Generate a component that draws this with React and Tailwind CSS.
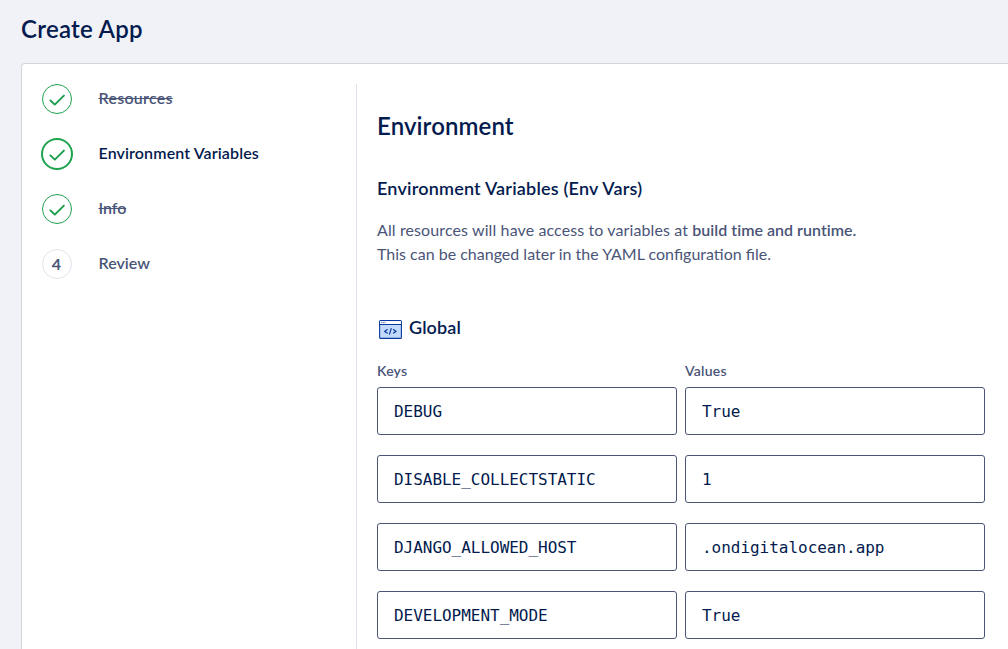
const steps = [
  { label: 'Resources', done: true, struck: true, tracking: 'tracking-[0.26px]' },
  { label: 'Environment Variables', done: true, active: true, tracking: 'tracking-[0.12px]' },
  { label: 'Info', done: true, struck: true, tracking: 'tracking-[-0.05px]' },
  { label: 'Review', number: 4, tracking: 'tracking-[0px]' },
];

const variables = [
  ['DEBUG', 'True'],
  ['DISABLE_COLLECTSTATIC', '1'],
  ['DJANGO_ALLOWED_HOST', '.ondigitalocean.app'],
  ['DEVELOPMENT_MODE', 'True'],
];

function StepMark({ step }) {
  if (!step.done) {
    return (
      <span className="flex size-[30px] items-center justify-center rounded-full border border-[#dfe2ea] pr-px pb-px text-[16px] font-bold text-[#4a5578]">
        {step.number}
      </span>
    );
  }
  return (
    <span
      className={
        step.active
          ? 'flex size-8 items-center justify-center rounded-full border-2 border-[#1ea34e]'
          : 'flex size-[30px] items-center justify-center rounded-full border border-[#1ea34e]'
      }
    >
      <svg className="size-4" viewBox="0 0 16 16" fill="none" stroke="#1a9d4b" strokeWidth="1.9" strokeLinecap="round" strokeLinejoin="round">
        <path d="M1.4 9.4 L5.8 13.6 L14.9 4.6" />
      </svg>
    </span>
  );
}

function Step({ step }) {
  const color = step.active ? 'text-[#031b4e]' : 'text-[#4a5578]';
  return (
    <li className="flex h-8 items-center">
      <span className="flex w-8 justify-center">{<StepMark step={step} />}</span>
      <span className={`mb-0.5 ml-[25.5px] text-[16px] leading-6 font-semibold ${color} ${step.tracking} ${step.struck ? 'line-through' : ''}`}>
        {step.label}
      </span>
    </li>
  );
}

function CodeWindowIcon() {
  return (
    <svg className="h-[19px] w-[23px]" viewBox="0 0 23 19" fill="none" stroke="#0a3a9c" strokeLinecap="round" strokeLinejoin="round">
      <rect x="0.6" y="0.6" width="21.8" height="17.8" rx="1" fill="#c3d9fb" strokeWidth="1.1" />
      <path d="M1.1 1.1h20.8v3H1.1z" fill="#fff" stroke="none" />
      <path d="M0.6 4.5h21.8" strokeWidth="1" />
      <path d="M2.5 2.6h.3M4.2 2.6h.3M5.8 2.6h.3" strokeWidth="0.7" />
      <path d="M8.2 9.6 L5.6 11.4 L8.2 13.1M14.5 9.6 L17.1 11.4 L14.5 13.1M12.2 8.6 L10.5 14.2" strokeWidth="1.2" />
    </svg>
  );
}

function Field({ value }) {
  return (
    <div className="flex h-12 w-[300px] items-center rounded-[3px] border border-[#4a5578] bg-white pt-0.5 pl-4 font-['DejaVu_Sans_Mono',monospace] text-[16px] leading-6 tracking-[-0.03px] text-[#031b4e]">
      {value}
    </div>
  );
}

export default function App() {
  return (
    <div className="flex h-[649px] w-[1008px] flex-col overflow-hidden bg-[#f1f2f7] pl-[21px] font-['Lato',sans-serif] text-[#031b4e]">
      <h1 className="flex h-[63px] shrink-0 items-start pt-[13px] text-[24px] leading-8 font-semibold tracking-[0.28px]">Create App</h1>
      <main className="flex min-h-0 w-[1010px] flex-1 rounded-tl border-t border-l border-[#d2d5db] bg-white pt-5">
        <ol className="-mt-px flex w-[334px] shrink-0 flex-col gap-[23px] pl-[19px]">
          {steps.map((step) => (
            <Step key={step.label} step={step} />
          ))}
        </ol>
        <section className="flex-1 border-l border-[#dfe2ea] pl-5">
          <h2 className="mt-[26px] text-[24px] leading-8 font-semibold tracking-[0.1px]">Environment</h2>
          <h3 className="mt-[34px] text-[18px] leading-6 font-semibold tracking-[0.2px]">Environment Variables (Env Vars)</h3>
          <p className="mt-[18px] text-[16px] leading-6 whitespace-nowrap text-[#4a5578]">
            <span className="tracking-[0.11px]">All resources will have access to variables at </span>
            <strong className="font-semibold tracking-[0.02px]">build time and runtime.</strong>
            <br />
            <span>This can be changed later in the YAML configuration file.</span>
          </p>
          <div className="mt-[49px] flex h-6 items-center">
            <span className="mt-[5px] ml-0.5"><CodeWindowIcon /></span>
            <h4 className="ml-[7px] text-[18px] leading-6 font-semibold tracking-[0.1px]">Global</h4>
          </div>
          <div className="mt-[22px] flex gap-2 text-[14px] leading-5 font-semibold tracking-[0.22px] text-[#4a5578]">
            <span className="w-[300px]">Keys</span>
            <span className="w-[300px]">Values</span>
          </div>
          <div className="mt-[6px] flex flex-col gap-5">
            {variables.map(([key, value]) => (
              <div key={key} className="flex gap-2">
                <Field value={key} />
                <Field value={value} />
              </div>
            ))}
          </div>
        </section>
      </main>
    </div>
  );
}
